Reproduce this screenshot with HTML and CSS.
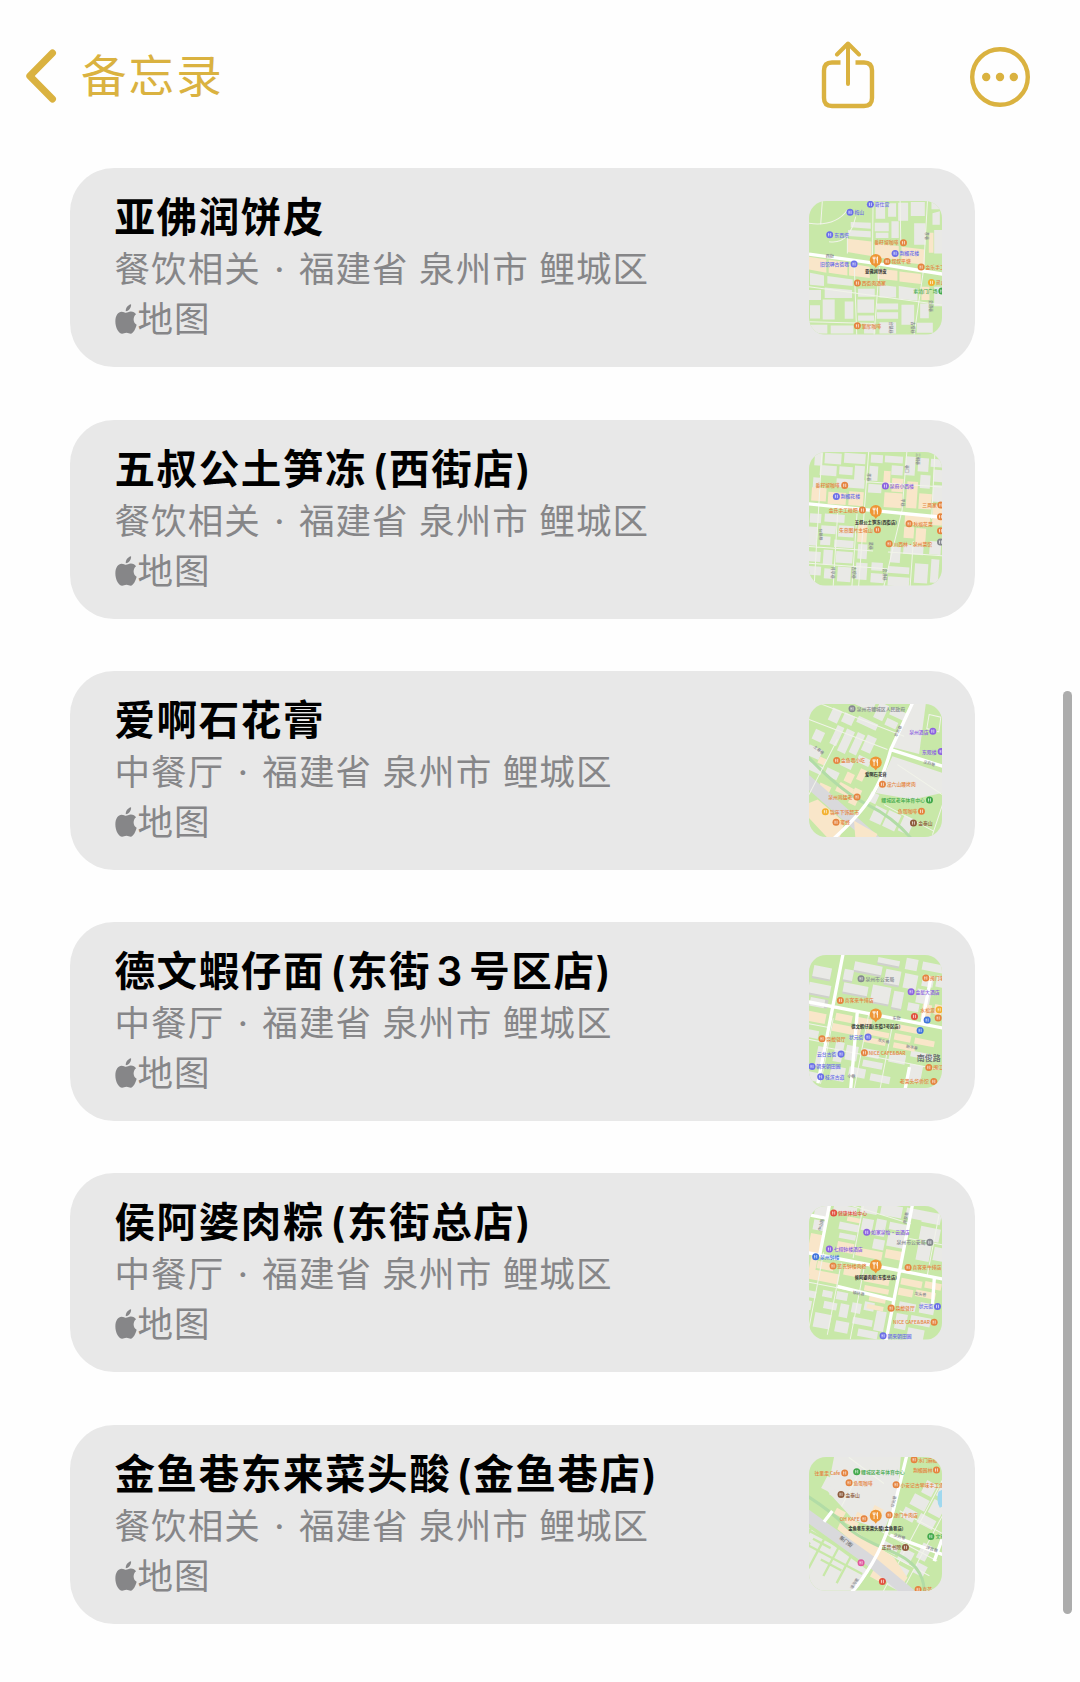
FILE: index.html
```html
<!DOCTYPE html>
<html lang="zh-CN">
<head>
  <meta charset="UTF-8" />
  <meta name="viewport" content="width=device-width, initial-scale=1.0"/>
  <title>备忘录</title>
  <link rel="stylesheet" href="styles.css">
</head>
<body>
  <!-- shared shapes -->
  <svg class="defs" width="0" height="0">
    <symbol id="dot" viewBox="-12 -12 24 24" overflow="visible">
      <circle r="10.5" fill="currentColor"/>
      <path d="M-3 -5v10M3 -5v10M-4 -1h3" stroke="#fff" stroke-width="2.4" opacity=".8"/>
    </symbol>
    <symbol id="pin" viewBox="-20 -20 40 40" overflow="visible">
      <path d="M-6 15L0 24L6 15z" fill="#ee9636"/>
      <circle r="18" fill="#ee9636"/>
      <path d="M-5 -10v6M-5 -4v14M-8 -10v6h6v-6M5 10v-20q-4 6 0 12" stroke="#fff" stroke-width="2.4" fill="none"/>
    </symbol>
    <symbol id="apple" viewBox="0 0 22 31">
      <path d="M16.200 0.300C16.600 3.600 14.200 7.300 10.800 7.500C10.300 4.400 13 1 16.200 0.300z"/>
      <path d="M11 9C12.400 9 13.700 7.700 16 7.700C18.400 7.700 20.400 8.800 21.400 10.600C17.800 13.200 18.200 19.400 22 21.500C21 25.500 18.500 30.700 15.900 30.700C14.200 30.700 13.400 29.700 11.500 29.700C9.500 29.700 8.500 30.700 7 30.700C3.600 30.700 0 24.500 0 18C0 11.500 3 7.900 6.500 7.900C8.500 7.900 9.800 9 11 9z"/>
    </symbol>
  </svg>

  <header class="navbar">
    <a class="back" href="#">
      <svg class="chevron" viewBox="0 0 32 56"><path d="M27.500 4L4.800 27L27.500 50"/></svg>
      <span>备忘录</span>
    </a>
    <div class="actions">
      <svg class="share" viewBox="0 0 54 68">
        <path d="M19.500 21.500H11Q3 21.500 3 29.500V57Q3 65 11 65H43Q51 65 51 57V29.500Q51 21.500 43 21.500H34.500"/>
        <path class="arrow" d="M27 2.500V43M16 13.500L27 2.500L38 13.500"/>
      </svg>
      <svg class="more" viewBox="0 0 60 60">
        <circle class="ring" cx="30" cy="30" r="27.800"/>
        <circle cx="16.200" cy="30" r="4.200"/><circle cx="30" cy="30" r="4.200"/><circle cx="43.800" cy="30" r="4.200"/>
      </svg>
    </div>
  </header>

  <main class="notes">
    <article class="card">
      <div class="info">
        <h2>亚佛润饼皮</h2>
        <p>餐饮相关<span class="sep">·</span>福建省 泉州市 鲤城区</p>
        <p class="source"><svg class="apple"><use href="#apple"/></svg>地图</p>
      </div>
      <svg class="map" viewBox="25 33 400 400">
        <rect class="green" x="25" y="33" width="400" height="400"/>
        <path class="block" d="M225 36h28v50h-28zM262 40h24v40h-24zM292 38h30v54h-30zM330 36h42v42h-42zM222 98h42v26h-42zM272 94h22v50h-22zM340 100h34v64h-34zM142 120l68 4v18l-68-4zM150 96l60 2v18l-60-4zM392 36h33v22h-33zM395 70l22-6v40h-22zM225 128h38v16h-38zM400 120h25v70h-25z"/>
        <path class="peach" d="M140 146l72 8v44l-72-12zM25 200l52 8v40l-52-10zM84 210l56 6v40l-56-8zM145 220l62 10v34l-62-8zM222 160l72 8v40l-72-6zM302 170l70 8v46l-70-8zM230 236l60 6v30l-60-6zM296 244l64 8v30l-64-8zM384 128h14v60h-14zM362 290h24v40h-24z"/>
        <path class="block" d="M28 248l42 8v32l-42-4zM80 258l76 10v20l-76-8zM25 300h36v30h-36zM66 328h36v60h-36zM72 292l82 8v24h-82zM132 334h26v52h-26zM28 345h30v40h-30zM172 296h50v24h-50zM170 328h50v40h-50zM172 376h48v16h-48zM236 284l50 6v32h-50zM294 288l56 8v36l-56-6zM228 340h64v18h-64zM228 366h64v20h-64zM302 344h38v60h-38zM358 340h26v44h-26zM30 404h50v26h-50zM90 406h68v24h-68zM190 402h34v28h-34zM236 396h50v34h-50zM348 398h48v30h-48zM400 290h25v58h-25z"/>
        <path class="lane" d="M65 33L60 104M25 100q80 10 115-40M85 155q60 10 80-75M217 33L215 200M380 33L368 240L340 433M160 210L168 433M236 230L220 433M140 130L140 190M298 33L300 160M25 290L425 345M25 395L220 400"/>
        <path class="road" d="M25 192L225 220L425 252"/>
        <g class="place"><use href="#dot" x="197" y="31" width="24" height="24"/><text x="222" y="48">奇仕宫</text></g>
        <g class="place"><use href="#dot" x="136" y="55" width="24" height="24"/><text x="161" y="73">梅山</text></g>
        <g class="place"><use href="#dot" x="75" y="122" width="24" height="24"/><text x="101" y="140">东西塔</text></g>
        <g class="food"><use href="#dot" x="296" y="146" width="24" height="24"/><text class="end" x="293" y="163">番籽留咖啡</text></g>
        <g class="place"><use href="#dot" x="271" y="178" width="24" height="24"/><text x="297" y="196">荆楣花楼</text></g>
        <g class="food"><use href="#dot" x="247" y="202" width="24" height="24"/><text x="272" y="220">叔叔平塘</text></g>
        <g class="place"><use href="#dot" x="148" y="210" width="24" height="24"/><text class="end" x="145" y="228">旧馆驿古街巷</text></g>
        <g class="food"><use href="#dot" x="349" y="219" width="24" height="24"/><text x="374" y="237">金乐手工</text></g>
        <g class="food"><use href="#dot" x="158" y="267" width="24" height="24"/><text x="183" y="285">西街肉酒家</text></g>
        <g class="food"><use class="yellow" href="#dot" x="380" y="265" width="24" height="24"/><text x="405" y="283">灵山</text></g>
        <g class="leaf"><use href="#dot" x="411" y="291" width="24" height="24"/><text class="end" x="410" y="308">素清门广场</text></g>
        <g class="food"><use href="#dot" x="158" y="395" width="24" height="24"/><text x="183" y="413">擎摩咖啡</text></g>
        <text class="street" x="75" y="203">西街</text><text class="street" transform="translate(265 394) rotate(90)">台魁巷</text><text class="street" transform="translate(332 394) rotate(90)">古榕巷</text><text class="street" transform="translate(386 330) rotate(90)">会通巷</text><text class="street" transform="translate(373 126) rotate(90)">孝巷</text>
        <use href="#pin" x="205" y="190" width="40" height="40"/>
        <text class="name" x="225" y="249">亚佛润饼皮</text>
      </svg>
    </article>

    <article class="card">
      <div class="info">
        <h2>五叔公土笋冻 (西街店)</h2>
        <p>餐饮相关<span class="sep">·</span>福建省 泉州市 鲤城区</p>
        <p class="source"><svg class="apple"><use href="#apple"/></svg>地图</p>
      </div>
      <svg class="map" viewBox="25 31 400 400">
        <rect class="green" x="25" y="31" width="400" height="400"/>
        <g transform="rotate(4 225 230)">
          <path class="block" d="M30 44h24v40H30zM48 82h50v30H48zM60 44h50v32H60zM118 40h64v30h-64zM106 82h40v24h-40zM152 76h30v44h-30zM100 118h84v26h-84zM198 40h36v24h-36zM196 74h26v44h-26zM240 40h54v20h-54zM262 68h34v28h-34zM302 38h30v56h-30zM340 40h32v40h-32zM378 40h50v24h-50zM388 72h40v36h-40zM350 90h30v40h-30zM196 128h40v26h-40zM390 118h36v50h-36zM30 120h20v40H30z"/>
          <path class="peach" d="M28 150h44v40H28zM78 160h54v36H78zM140 154h44v42h-44zM240 86h20v44h-20zM266 106h34v40h-34zM246 150h54v44h-54zM312 112h32v80h-32zM350 146h38v46h-38zM312 212h76v30h-76zM312 248h30v34h-30zM394 178h30v60h-30zM174 248h28v56h-28zM348 250h30v50h-30z"/>
          <path class="block" d="M28 228h34v28H28zM72 226h60v24H72zM26 268h28v56H26zM64 262h44v24H64zM116 258h46v34h-46zM64 294h30v26H64zM106 302h58v22h-58zM178 310h28v44h-28zM30 342h38v30H30zM76 334h28v44H76zM114 336h50v34h-50zM32 386h40v26H32zM82 390h30v30H82zM122 382h40v44h-40zM176 366h34v50h-34zM222 362h34v24h-34zM222 394h40v28h-40zM276 310h30v48h-30zM314 302h60v28h-60zM272 370h64v20h-64zM274 400h64v28h-64zM352 356h40v58h-40zM392 286h34v40h-34zM400 340h24v70h-24z"/>
          <path class="lane" d="M50 31L55 440M190 20L188 440M304 20L302 200L262 440M388 20L392 220M110 220L112 440M168 220L168 440M20 328H440M20 378H270M342 290V440M190 122H440"/>
          <path class="road" d="M10 200L220 207L440 213"/>
        </g>
        <path class="green" d="M224 240l62 4l-10 54l-60-6zM218 315l45 8l-6 36l-42-6z"/>
        <g class="food"><use href="#dot" x="120" y="119" width="24" height="24"/><text class="end" x="117" y="137">番籽留咖啡</text></g>
        <g class="place"><use href="#dot" x="95" y="152" width="24" height="24"/><text x="120" y="170">荆楣花楼</text></g>
        <g class="hotel"><use href="#dot" x="242" y="121" width="24" height="24"/><text x="267" y="139">泉府小西楼</text></g>
        <g class="food"><use href="#dot" x="173" y="193" width="24" height="24"/><text class="end" x="171" y="210">金氏手工糍粑</text></g>
        <g class="food"><use href="#dot" x="408" y="178" width="24" height="24"/><text class="end" x="408" y="196">三两家</text></g>
        <use class="food" href="#dot" x="407" y="213" width="24" height="24"/><use class="food" href="#dot" x="407" y="255" width="24" height="24"/><use class="civic" href="#dot" x="407" y="289" width="24" height="24"/>
        <g class="food"><use href="#dot" x="313" y="234" width="24" height="24"/><text x="338" y="253">秋福花菜</text></g>
        <g class="food"><use href="#dot" x="218" y="252" width="24" height="24"/><text class="end" x="216" y="270">朱熹图片主城山</text></g>
        <g class="food"><use href="#dot" x="253" y="294" width="24" height="24"/><text x="278" y="312">川西林·泉州菜馆</text></g>
        <text class="street" transform="translate(55 260) rotate(88)">台魁巷</text><text class="street" transform="translate(91 375) rotate(90)">井亭巷</text><text class="street" transform="translate(154 375) rotate(90)">古榕巷</text><text class="street" transform="translate(247 380) rotate(90)">会通巷</text><text class="street" transform="translate(205 300) rotate(90)">裴巷</text><text class="street" transform="translate(198 95) rotate(90)">孝巷</text><text class="street" transform="translate(302 170) rotate(90)">平巷</text><text class="street" transform="translate(313 70) rotate(90)">巷口</text><text class="street" transform="translate(346 34) rotate(90)">三朝巷</text>
        <use href="#pin" x="205" y="188" width="40" height="40"/>
        <text class="name" x="225" y="247">五叔公土笋冻(西街店)</text>
      </svg>
    </article>

    <article class="card">
      <div class="info">
        <h2>爱啊石花膏</h2>
        <p>中餐厅<span class="sep">·</span>福建省 泉州市 鲤城区</p>
        <p class="source"><svg class="apple"><use href="#apple"/></svg>地图</p>
      </div>
      <svg class="map" viewBox="25 28.500 400 400">
        <rect class="green" x="25" y="28" width="400" height="401"/>
        <path class="block" d="M330 28h45l-20 150l-80-20zM275 185l150 50v60l-90 20l-110-20z"/>
        <g transform="rotate(25 225 228)">
          <path class="block" d="M30 110h30v40H30zM68 108h34v30H68zM110 100h64v20h-64zM80 40h60v34H80zM150 36h30v50h-30zM190 34h50v24h-50zM190 70h36v22h-36zM64 152h22v60H64zM94 150h26v72H94zM128 146h24v66h-24zM158 140h30v50h-30zM10 190h30v32H10zM12 240h44v32H12zM160 206h40v22h-40zM120 236h36v22h-36zM30 286h50v24H30zM90 280h40v24H90zM270 322h36v48h-36zM312 318h40v52h-40zM360 312h34v50h-34zM240 290h26v30h-26z"/>
          <path class="peach" d="M56 260h22v20H56zM150 266h24v30h-24zM182 240h20v36h-20zM140 314h40v20h-40zM90 330h36v20H90zM190 300h24v50h-24z"/>
        </g>
        <path class="rail" d="M15 255L225 440"/>
        <path class="peach" d="M25 325l26-10l80 68l-14 46H80L25 370zM120 262l40 22l-6 16l-44-24zM160 378l70 40l-6 14h-60z"/>
        <path class="stream" d="M20 185Q120 290 200 330T330 430"/>
        <path class="lane" d="M25 75L260 165M60 28L310 125M110 135L25 300M290 210L425 300M250 330L400 410M395 420L425 330"/>
        <path class="road" d="M340 15L270 165Q250 240 215 300T90 440M270 165L425 215"/>
        <path class="green" d="M376 50q20-14 49 16v64l-55-16zM365 150l60 10v40l-62-18z"/>
        <path class="lane" d="M385 60L420 68L414 112L378 102z"/>
        <g class="civic"><use href="#dot" x="142" y="31" width="24" height="24"/><text x="168" y="49">泉州市鲤城区人民政府</text></g>
        <g class="hotel"><use href="#dot" x="384" y="98" width="24" height="24"/><text class="end" x="383" y="117">泉州酒店</text></g>
        <g class="hotel"><use href="#dot" x="409" y="159" width="24" height="24"/><text class="end" x="407" y="177">东观楼</text></g>
        <g class="food"><use href="#dot" x="96" y="186" width="24" height="24"/><text x="121" y="203">金鱼巷小吃</text></g>
        <g class="food"><use href="#dot" x="233" y="257" width="24" height="24"/><text x="258" y="275">潼六山腰烤肉</text></g>
        <g class="food"><use href="#dot" x="157" y="295" width="24" height="24"/><text class="end" x="155" y="312">泉州鸡猛老</text></g>
        <g class="leaf"><use href="#dot" x="374" y="304" width="24" height="24"/><text class="end" x="372" y="322">鲤城区老年体育中心</text></g>
        <g class="food"><use class="yellow" href="#dot" x="62" y="339" width="24" height="24"/><text x="88" y="357">锦年下饰超市</text></g>
        <g class="food"><use href="#dot" x="350" y="338" width="24" height="24"/><text class="end" x="349" y="356">鱼蛋咖啡</text></g>
        <g class="food"><use href="#dot" x="94" y="371" width="24" height="24"/><text x="119" y="389">蜜蜂</text></g>
        <g class="brown"><use href="#dot" x="326" y="373" width="24" height="24"/><text x="352" y="392">金泰山</text></g>
        <text class="street" transform="translate(38 158) rotate(40)">土巷巷</text><text class="street" transform="translate(288 128) rotate(-65)">华光巷</text><text class="street" transform="translate(367 205) rotate(17)">庄府巷</text>
        <use href="#pin" x="205" y="184" width="40" height="40"/>
        <text class="name" x="225" y="245">爱啊石花膏</text>
      </svg>
    </article>

    <article class="card">
      <div class="info">
        <h2>德文蝦仔面 (东街 3 号区店)</h2>
        <p>中餐厅<span class="sep">·</span>福建省 泉州市 鲤城区</p>
        <p class="source"><svg class="apple"><use href="#apple"/></svg>地图</p>
      </div>
      <svg class="map" viewBox="25 26 400 400">
        <rect class="green" x="25" y="26" width="400" height="400"/>
        <g transform="rotate(11 225 226)">
          <path class="shade" d="M130 66h84v26h-84zM12 100h54v34H12zM8 152h66v32H8zM110 134h74v28h-74zM226 70h46v42h-46zM196 40h66v16h-66zM196 124h56v50h-56zM104 94h28v32h-28zM30 190h44v26H30zM262 130h30v50h-30z"/>
          <path class="block" d="M130 60h84v26h-84zM12 94h54v34H12zM8 146h66v32H8zM110 128h74v28h-74zM226 64h46v42h-46zM196 34h66v16h-66zM196 118h56v50h-56zM280 20h36v34h-36zM284 66h40v44h-40zM330 22h70v24h-70zM338 60h34v34h-34zM330 104h42v42h-42zM380 54h44v34h-44zM20 190h44v26H20zM262 124h30v50h-30zM310 150h34v24h-34zM104 88h28v32h-28zM20 286h44v24H20zM70 330h24v60H70zM120 306h26v60h-26zM154 310h36v44h-36zM204 310h50v24h-50zM210 344h60v20h-60zM174 372h50v28h-50zM240 380h60v22h-60zM284 308h50v28h-50zM346 290h70v18h-70zM350 330h40v50h-40zM120 380h44v42h-44zM40 410h46v26H40z"/>
          <path class="peach" d="M10 232h66v30H10zM104 222h50v22h-50zM164 222h50v22h-50zM100 254h86v24h-86zM202 252h70v16h-70zM290 220h76v18h-76zM288 248h50v20h-50zM350 250h60v18h-60zM200 276h66v16h-66zM290 276h66v16h-66zM354 146h28v44h-28zM390 140h24v30h-24z"/>
          <path class="lane" d="M10 270H90M90 330H440M98 240V440M200 210V440M276 220V440M10 316H90"/>
          <path class="road" d="M-20 206H460M90 10V440M362 60V206M165 206L190 440M350 340V440"/>
        </g>
        <g class="civic"><use href="#dot" x="169" y="85" width="24" height="24"/><text x="194" y="103">泉州市公安局</text></g>
        <g class="food"><use href="#dot" x="363" y="83" width="24" height="24"/><text x="387" y="101">闽门李</text></g>
        <g class="hotel"><use href="#dot" x="319" y="124" width="24" height="24"/><text x="344" y="142">金星大酒店</text></g>
        <g class="food"><use href="#dot" x="107" y="150" width="24" height="24"/><text x="132" y="168">喜客来牛排店</text></g>
        <g class="food"><use class="yellow" href="#dot" x="403" y="178" width="24" height="24"/><text class="end" x="402" y="196">水松源</text></g>
        <use class="red" href="#dot" x="329" y="198" width="24" height="24"/><use class="metro" href="#dot" x="367" y="209" width="24" height="24"/><use class="metro" href="#dot" x="346" y="240" width="24" height="24"/><use class="food" href="#dot" x="400" y="203" width="24" height="24"/>
        <g class="food"><use href="#dot" x="52" y="265" width="24" height="24"/><text x="77" y="283">鼎馥餐厅</text></g>
        <g class="place"><use href="#dot" x="190" y="260" width="24" height="24"/><text class="end" x="188" y="278">状元街</text></g>
        <g class="food"><use href="#dot" x="179" y="307" width="24" height="24"/><text x="204" y="325">NICE CAFE&amp;BAR</text></g>
        <g class="place"><use href="#dot" x="109" y="311" width="24" height="24"/><text class="end" x="107" y="329">云台古街</text></g>
        <g class="place"><use href="#dot" x="22" y="348" width="24" height="24"/><text x="47" y="366">朝来朝田园</text></g>
        <g class="place"><use href="#dot" x="48" y="379" width="24" height="24"/><text x="73" y="397">桂滨古道</text></g>
        <g class="food"><use href="#dot" x="372" y="351" width="24" height="24"/><text x="397" y="369">闽江</text></g>
        <g class="food"><use href="#dot" x="387" y="393" width="24" height="24"/><text class="end" x="384" y="411">老莱头华侨馆</text></g>
        <text class="district" x="348" y="344">南俊路</text>
        <text class="street" x="275" y="221">东街</text><text class="street" transform="translate(230 284) rotate(12)">龙头巷</text><text class="street" transform="translate(315 303) rotate(12)">新丰巷</text><text class="street" x="140" y="396">小巷</text>
        <use href="#pin" x="205" y="184" width="40" height="40"/>
        <text class="name" x="225" y="244">德文蝦仔面(东街3号区店)</text>
      </svg>
    </article>

    <article class="card">
      <div class="info">
        <h2>侯阿婆肉粽 (东街总店)</h2>
        <p>中餐厅<span class="sep">·</span>福建省 泉州市 鲤城区</p>
        <p class="source"><svg class="apple"><use href="#apple"/></svg>地图</p>
      </div>
      <svg class="map" viewBox="25 30 400 400">
        <rect class="green" x="25" y="30" width="400" height="400"/>
        <g transform="rotate(11 225 230)">
          <path class="block" d="M10 60h40v34H10zM14 108h34v30H14zM64 50h70v22H64zM144 20h50v40h-50zM204 22h64v34h-64zM280 20h50v30h-50zM90 100h60v22H90zM156 76h34v36h-34zM198 70h30v50h-30zM238 72h60v22h-60zM240 104h54v40h-54zM330 20h56v34h-56zM332 66h60v40h-60zM334 118h40v50h-40zM384 120h40v40h-40zM96 132h50v16H96zM200 130h34v30h-34zM20 320h42v20H20zM30 350h24v28H30zM80 310h30v20H80zM90 342h40v22H90zM70 380h50v44H70zM122 306h34v24h-34zM140 340h26v40h-26zM174 330h28v30h-28zM210 320h30v26h-30zM184 372h60v20h-60zM136 392h40v34h-40zM250 340h30v60h-30zM312 300h50v24h-50zM310 336h34v46h-34zM354 334h60v26h-60zM374 290h44v32h-44zM352 372h50v40h-50zM206 404h60v22h-60z"/>
          <path class="peach" d="M12 150h36v60H12zM96 158h50v30H96zM154 166h80v24h-80zM110 80h42v14h-42zM242 154h50v26h-50zM48 228h50v22H48zM30 256h90v30H30zM130 226h50v28h-50zM194 240h76v22h-76zM304 230h64v20h-64zM376 226h50v20h-50zM302 260h44v22h-44zM200 272h74v16h-74zM220 300h50v16h-50zM218 326h50v14h-50zM354 256h60v20h-60zM26 212h20v60H26z"/>
          <path class="lane" d="M60 40L300 66M150 20V200M304 110H440M188 206V440M10 296H300M60 200V440M118 220V440M378 10V210"/>
          <path class="road" d="M-20 210H460M50 -10V210M294 0V440M120 292L294 300M400 210L410 290M0 98H50"/>
        </g>
        <g class="red"><use href="#dot" x="87" y="39" width="24" height="24"/><text x="112" y="57">健康体检中心</text></g>
        <g class="hotel"><use href="#dot" x="186" y="97" width="24" height="24"/><text x="211" y="115">如家泉怡·云酒店</text></g>
        <g class="civic"><use href="#dot" x="375" y="127" width="24" height="24"/><text class="end" x="374" y="145">泉州市公安局</text></g>
        <g class="hotel"><use href="#dot" x="74" y="147" width="24" height="24"/><text x="99" y="165">七栩钟楼酒店</text></g>
        <g class="metro"><use href="#dot" x="33" y="170" width="24" height="24"/><text x="58" y="188">泉州钟楼</text></g>
        <g class="food"><use href="#dot" x="85" y="198" width="24" height="24"/><text x="110" y="216">蓝氏钟楼肉粽</text></g>
        <g class="food"><use href="#dot" x="310" y="202" width="24" height="24"/><text x="335" y="220">喜客来牛排店</text></g>
        <g class="food"><use href="#dot" x="259" y="324" width="24" height="24"/><text x="284" y="342">鼎馥餐厅</text></g>
        <g class="place"><use href="#dot" x="398" y="319" width="24" height="24"/><text class="end" x="397" y="337">状元街</text></g>
        <g class="food"><use href="#dot" x="388" y="366" width="24" height="24"/><text class="end" x="387" y="384">NICE CAFE&amp;BAR</text></g>
        <g class="place"><use href="#dot" x="235" y="407" width="24" height="24"/><text x="260" y="425">朝来朝田园</text></g>
        <text class="street" transform="translate(316 84) rotate(-80)">南俊巷</text><text class="street" transform="translate(60 105) rotate(-75)">中山路</text><text class="street" transform="translate(155 293) rotate(10)">镇抚巷</text><text class="street" transform="translate(340 295) rotate(10)">龙头巷</text>
        <use href="#pin" x="205" y="188" width="40" height="40"/>
        <text class="name" x="225" y="248">侯阿婆肉粽(东街总店)</text>
      </svg>
    </article>

    <article class="card">
      <div class="info">
        <h2>金鱼巷东来菜头酸 (金鱼巷店)</h2>
        <p>餐饮相关<span class="sep">·</span>福建省 泉州市 鲤城区</p>
        <p class="source"><svg class="apple"><use href="#apple"/></svg>地图</p>
      </div>
      <svg class="map" viewBox="25 28 400 400">
        <rect class="green" x="25" y="28" width="400" height="400"/>
        <path class="block" d="M100 28h200l-10 120l-40 100l-90-30L80 130zM25 240l180 130l-40 58H25z"/>
        <g transform="rotate(28 225 228)">
          <path class="block" d="M40 130h60v24H40zM60 164h60v20H60zM30 170h22v40H30zM80 70h60v40H80zM150 120h60v40h-60zM60 196h50v20H60zM300 40h34v40h-34zM344 24h34v44h-34zM286 92h50v36h-50zM346 80h40v44h-40zM280 140h40v34h-40zM330 136h52v30h-52zM270 260h50v24h-50zM330 252h40v40h-40zM290 296h30v44h-30zM378 210h30v50h-30zM330 304h50v28h-50zM390 270h34v34h-34zM340 344h50v30h-50z"/>
          <path class="peach" d="M140 250h40v18h-40zM100 240h30v20h-30zM226 290h22v44h-22zM254 296h24v50h-24zM196 180h30v30h-30zM160 222h40v14h-40zM284 350h40v26h-40z"/>
          <path class="greenline" d="M20 340H240M40 380H260M60 300V440M110 310V440M160 320V440M205 330V440M20 364l60 10M80 356h60M130 400h70"/>
          <path class="lane" d="M270 160H440M250 240H440M262 290H440M340 0V420M390 0V420M60 90L190 110M110 130V230"/>
        </g>
        <path class="peach" d="M120 220l160 110l40 60l-14 20l-80-70l-116-96z"/>
        <path class="rail" d="M15 200L210 340L330 440"/>
        <path class="stream" d="M20 145Q90 190 130 230T270 310T370 430"/>
        <path class="road" d="M320 15L282 170Q260 270 215 345T145 440M268 262L425 320M95 190L70 222M400 340L425 270"/>
        <path class="water" d="M413 132q-8 30 4 48l10-4v-52z"/>
        <g class="food"><use href="#dot" x="328" y="24" width="24" height="24"/><text x="352" y="42">水门麻糍</text></g>
        <g class="food"><use href="#dot" x="120" y="64" width="24" height="24"/><text class="end" x="119" y="82">往里走 Cafe</text></g>
        <g class="leaf"><use href="#dot" x="156" y="60" width="24" height="24"/><text x="181" y="78">鲤城区老年体育中心</text></g>
        <g class="food"><use href="#dot" x="395" y="55" width="24" height="24"/><text class="end" x="395" y="73">荆楣园林</text></g>
        <g class="food"><use href="#dot" x="133" y="93" width="24" height="24"/><text x="158" y="111">鱼蛋咖啡</text></g>
        <g class="food"><use href="#dot" x="274" y="99" width="24" height="24"/><text x="299" y="117">小安记古早味手工鱼</text></g>
        <g class="brown"><use href="#dot" x="109" y="128" width="24" height="24"/><text x="134" y="147">金泰山</text></g>
        <g class="food"><use href="#dot" x="253" y="190" width="24" height="24"/><text x="279" y="208">涂门牛肉店</text></g>
        <g class="food"><use href="#dot" x="178" y="201" width="24" height="24"/><text class="end" x="177" y="219">OH KAFE</text></g>
        <g class="leaf"><use href="#dot" x="378" y="254" width="24" height="24"/><text x="404" y="272">文庙</text></g>
        <g class="brown"><use href="#dot" x="302" y="287" width="24" height="24"/><text class="end" x="301" y="305">正音书院</text></g>
        <use class="pink" href="#dot" x="169" y="333" width="24" height="24"/><use class="red" href="#dot" x="233" y="389" width="24" height="24"/>
        <g class="food"><use href="#dot" x="340" y="413" width="24" height="24"/><text x="365" y="430">喜茶</text></g>
        <text class="street big" transform="translate(115 272) rotate(38)">新门街</text><text class="street" transform="translate(279 180) rotate(-78)">华光巷</text><text class="street" transform="translate(278 265) rotate(17)">庄府巷</text><text class="street" transform="translate(375 302) rotate(18)">泮宫巷</text><text class="street" transform="translate(155 425) rotate(-58)">濠沟墘</text>
        <use href="#pin" x="205" y="184" width="40" height="40"/>
        <text class="name" x="225" y="246">金鱼巷东来菜头酸(金鱼巷店)</text>
      </svg>
    </article>
  </main>
  <div class="scrollbar"></div>
</body>
</html>
```
FILE: styles.css
```css
* {
    margin: 0;
    padding: 0;
    box-sizing: border-box;
}
body {
    background: #fefefe;
    width: 1080px;
    height: 1682px;
    overflow: hidden;
    font-family: 'Inter', 'Noto Sans CJK SC', sans-serif;
}
.defs {
    position: absolute;
}
.navbar {
    height: 168.3px;
    padding: 41px 50px 0 25px;
    display: flex;
    justify-content: space-between;
    align-items: flex-start;
    color: #dab240;
}
.back {
    display: flex;
    align-items: center;
    height: 72px;
    gap: 24px;
    color: inherit;
    text-decoration: none;
    font-size: 45.5px;
    line-height: 72px;
    letter-spacing: 2.1px;
}
.chevron {
    width: 32px;
    height: 56px;
    fill: none;
    stroke: currentColor;
    stroke-width: 7;
    stroke-linecap: round;
    stroke-linejoin: round;
}
.actions {
    display: flex;
    align-items: flex-start;
    gap: 95px;
}
.share {
    width: 54px;
    height: 68px;
    fill: none;
    stroke: currentColor;
    stroke-width: 4.4;
}
.arrow {
    stroke-width: 4;
    stroke-linecap: round;
    stroke-linejoin: round;
}
.more {
    width: 60px;
    height: 60px;
    margin-top: 6px;
    fill: currentColor;
}
.ring {
    fill: none;
    stroke: currentColor;
    stroke-width: 4.4;
}

/* cards */
.notes {
    display: flex;
    flex-direction: column;
    gap: 52.25px;
    width: 905px;
    margin-left: 70px;
}
.card {
    display: flex;
    justify-content: space-between;
    align-items: center;
    height: 199px;
    padding: 0 33px 0 44.5px;
    background: #e8e8e8;
    border-radius: 44px;
}
.info h2 {
    font-size: 40.5px;
    font-weight: 600;
    line-height: 55px;
    letter-spacing: 1.6px;
    word-spacing: -6.5px;
    white-space: nowrap;
    color: #000;
}
.info p {
    font-size: 35.5px;
    line-height: 50px;
    letter-spacing: 1.1px;
    word-spacing: -0.7px;
    white-space: nowrap;
    color: #868688;
}
.sep {
    display: inline-block;
    width: 38px;
    text-align: center;
}
.info .source {
    display: flex;
    align-items: center;
}
.apple {
    width: 22px;
    height: 30px;
    margin: 0 1px 2px 0;
    fill: #868688;
}

/* map thumbnails */
.map {
    width: 133.5px;
    height: 133.5px;
    border-radius: 17px;
    font-family: 'Noto Sans CJK SC', sans-serif;
    font-size: 14.5px;
    font-weight: 500;
}
.green { fill: #c8e8a8; }
.block { fill: #e9e9e6; }
.shade { fill: #cfd0cc; }
.peach { fill: #f9e6c9; }
.water { fill: #9fd8ef; }
.lane, .road, .rail, .stream, .greenline {
    fill: none;
    stroke: #f1f3ea;
    stroke-width: 3;
}
.road {
    stroke: #fff;
    stroke-width: 10;
}
.rail {
    stroke: #d9d9dc;
    stroke-width: 34;
}
.stream {
    stroke: #b2dca6;
    stroke-width: 9;
}
.greenline {
    stroke: #c8e8a8;
    stroke-width: 7;
}
.map text {
    fill: currentColor;
}
.map .end { text-anchor: end; }
.map .name {
    fill: #333;
    font-size: 13px;
    font-weight: 700;
    text-anchor: middle;
}
.map .street {
    fill: #84868e;
    font-size: 12px;
}
.map .big { font-size: 15px; fill: #666; }
.map .district {
    fill: #666a70;
    font-size: 24px;
}
.food { color: #e5843f; }
.place { color: #6b6fe8; }
.hotel { color: #8c62e0; }
.leaf { color: #41a84b; }
.civic { color: #85888f; }
.metro { color: #3f74dd; }
.brown { color: #8d5b3c; }
.red { color: #e2503f; }
.pink { color: #e0569d; }
.yellow { color: #f3b02e; }

.scrollbar {
    position: absolute;
    left: 1063px;
    top: 691px;
    width: 9px;
    height: 923px;
    border-radius: 5px;
    background: #acacac;
}
```
